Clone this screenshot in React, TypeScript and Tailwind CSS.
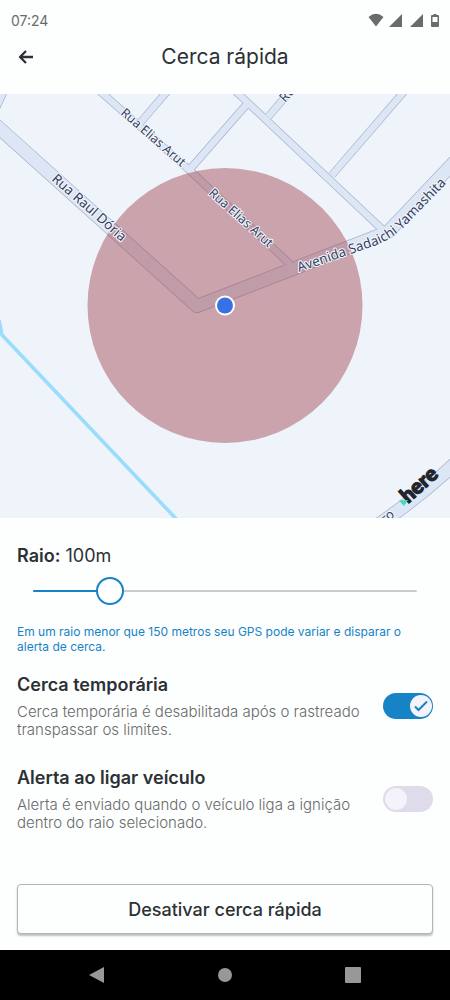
import { useState } from "react";

const ROADS = [
  { d: "M4 84 L-12 118", width: 13 },
  { d: "M140 123 L170 88", width: 7 },
  { d: "M191 168 L247 104", width: 7 },
  { d: "M268 117 L293 88", width: 7 },
  { d: "M332 175 L408 87", width: 7 },
  { d: "M93 85 L187 168 L290 264", width: 7 },
  { d: "M229 85 L384 231", width: 7 },
  { d: "M-12 118 L197 306 L388 232 L460 156", width: 13 },
  { d: "M372 529 Q420 497 460 459", width: 13 },
];

const LABEL = "fill-[#33415f] stroke-[#f4f7fd] font-['Noto_Sans',sans-serif]";

function MapView() {
  return (
    <svg
      viewBox="0 94 450 424"
      role="img"
      aria-label="Mapa"
      className="block w-full bg-[#eff4fb]"
    >
      <defs>
        <path id="raul" d="M51 180 L160 276" />
        <path id="elias-1" d="M120 114 L220 201" />
        <path id="elias-2" d="M208 194 L308 283" />
        <path id="avenida" d="M299 272 L374 246 Q393 239 406 225 L480 149" />
      </defs>

      {/* Roads: casing first, then fill, so junctions merge */}
      <g fill="none" stroke="#a7b2cd" strokeLinejoin="round">
        {ROADS.map((r) => (
          <path key={r.d} d={r.d} strokeWidth={r.width + 1} />
        ))}
      </g>
      <g fill="none" stroke="#dde6f4" strokeLinejoin="round">
        {ROADS.map((r) => (
          <path key={r.d} d={r.d} strokeWidth={r.width - 0.4} />
        ))}
      </g>

      {/* River */}
      <path
        d="M-1 320 L2 335 L181 524"
        fill="none"
        stroke="#99dcfb"
        strokeWidth="3.6"
        strokeLinejoin="round"
      />

      {/* Fence */}
      <circle cx="225" cy="305.5" r="137.5" fill="#9d414b" fillOpacity="0.45" />

      <g className={LABEL} strokeWidth="2" paintOrder="stroke" strokeLinejoin="round">
        <text fontSize="13.500">
          <textPath href="#raul">Rua Raul Dória</textPath>
        </text>
        <text fontSize="12.500">
          <textPath href="#elias-1">Rua Elias Arut</textPath>
        </text>
        <text fontSize="12.500">
          <textPath href="#elias-2">Rua Elias Arut</textPath>
        </text>
        <text fontSize="13.500">
          <textPath href="#avenida">Avenida Sadaichi Yamashita</textPath>
        </text>
        <text fontSize="13" transform="translate(285 103) rotate(-48)">Ru</text>
        <text fontSize="13" transform="translate(385 524) rotate(-38)">ro</text>
      </g>

      {/* HERE logo */}
      <text
        transform="translate(408 504) rotate(-42)"
        fontSize="21"
        fontWeight="900"
        strokeWidth="1.2"
        className="fill-[#20242b] stroke-[#20242b] font-[Lato,sans-serif]"
      >
        here
      </text>
      <path d="M399 500.500 L408 500 L404 506 Z" fill="#3edbc0" />

      {/* Vehicle */}
      <circle cx="225" cy="305.500" r="10" fill="#fff" />
      <circle cx="225" cy="305.500" r="8" fill="#3870e6" />
    </svg>
  );
}

function StatusBar() {
  return (
    <div className="flex h-10 items-center justify-between pr-2 pl-[11px] text-[#6b6b6b]">
      <span className="text-[14px]">07:24</span>
      <svg width="74" height="16" viewBox="0 0 74 16" fill="currentColor" aria-hidden="true">
        <path d="M0.500 5 Q8 -1.400 15.500 5 L8 14.500 Z" />
        <path d="M34 2 V15 H21 Z" />
        <path d="M55 2 V15 H42 Z" />
        <path
          fillRule="evenodd"
          d="M65.500 2 H68.500 V3 H70 Q71 3 71 4 V14 Q71 15 70 15 H64 Q63 15 63 14 V4 Q63 3 64 3 H65.500 Z M64.500 5 V10 H69.500 V5 Z"
        />
      </svg>
    </div>
  );
}

type ToggleRowProps = {
  id: string;
  title: string;
  description: string;
  checked: boolean;
  onChange: (checked: boolean) => void;
};

function ToggleRow({ id, title, description, checked, onChange }: ToggleRowProps) {
  return (
    <div className="flex items-center justify-between gap-4">
      <div className="flex flex-col gap-1.5">
        <label htmlFor={id} className="text-[18px] leading-6 font-semibold">
          {title}
        </label>
        <p id={`${id}-desc`} className="text-[15px] leading-[18px] font-light text-[#686b6b]">
          {description}
        </p>
      </div>
      <div className="relative h-[26px] w-[50px] shrink-0">
        <input
          id={id}
          type="checkbox"
          role="switch"
          aria-describedby={`${id}-desc`}
          checked={checked}
          onChange={(e) => onChange(e.target.checked)}
          className="block h-full w-full cursor-pointer appearance-none rounded-full bg-[#dfdbea] checked:bg-[#1583c5]"
        />
        <span
          className={`pointer-events-none absolute top-[2px] flex h-[22px] w-[22px] items-center justify-center rounded-full bg-[#f4f2fb] ${
            checked ? "right-[1px] text-[#1583c5]" : "left-[2px] text-[#f4f2fb]"
          }`}
        >
          <svg width="14" height="12" viewBox="0 0 14 12" fill="none" aria-hidden="true">
            <path d="M1 6.500 L4.500 10 L13 1.500" stroke="currentColor" strokeWidth="2" />
          </svg>
        </span>
      </div>
    </div>
  );
}

export default function App() {
  const [radius, setRadius] = useState(100);
  const [temporary, setTemporary] = useState(true);
  const [ignitionAlert, setIgnitionAlert] = useState(false);

  return (
    <div className="flex min-h-screen flex-col bg-[#fdfefe] font-[Inter,sans-serif] text-[#2b3135]">
      <StatusBar />

      <header className="mb-5 grid h-[34px] grid-cols-[28px_1fr_28px] items-center px-3">
        <button type="button" aria-label="Voltar" className="flex justify-center">
          <svg width="16" height="14" viewBox="0 0 16 14" fill="none" aria-hidden="true">
            <path
              d="M8 1 L2 7 L8 13 M2 7 H15"
              stroke="currentColor"
              strokeWidth="2.300"
              strokeLinejoin="round"
            />
          </svg>
        </button>
        <h1 className="text-center text-[21px]">Cerca rápida</h1>
      </header>

      <MapView />

      <main className="flex flex-1 flex-col px-[17px] pt-[26px] pb-4">
        <label htmlFor="radius" className="text-[18px] leading-6">
          <span className="font-semibold">Raio:</span> {radius}m
        </label>

        <div className="relative mx-4 mt-[9px] flex h-7 items-center">
          <div className="h-[2px] w-full rounded-full bg-[#cbcbcb]">
            <div
              className="h-full rounded-full bg-[#1583c5]"
              style={{ width: `${radius / 5}%` }}
            />
          </div>
          {/* Overhangs by half a thumb so the thumb centre follows the track */}
          <input
            id="radius"
            type="range"
            min={0}
            max={500}
            step={10}
            value={radius}
            onChange={(e) => setRadius(Number(e.target.value))}
            className="absolute -inset-x-[14px] top-0 h-7 cursor-pointer appearance-none bg-transparent [&::-webkit-slider-thumb]:h-7 [&::-webkit-slider-thumb]:w-7 [&::-webkit-slider-thumb]:appearance-none [&::-webkit-slider-thumb]:rounded-full [&::-webkit-slider-thumb]:border-2 [&::-webkit-slider-thumb]:border-[#1583c5] [&::-webkit-slider-thumb]:bg-white"
          />
        </div>

        <p className="mt-[19px] text-[12px] leading-[15px] text-[#1583c5]">
          Em um raio menor que 150 metros seu GPS pode variar e disparar o alerta de cerca.
        </p>

        <div className="mt-[19px] flex flex-col gap-[27px]">
          <ToggleRow
            id="temporary"
            title="Cerca temporária"
            description="Cerca temporária é desabilitada após o rastreado transpassar os limites."
            checked={temporary}
            onChange={setTemporary}
          />
          <ToggleRow
            id="ignition"
            title="Alerta ao ligar veículo"
            description="Alerta é enviado quando o veículo liga a ignição dentro do raio selecionado."
            checked={ignitionAlert}
            onChange={setIgnitionAlert}
          />
        </div>

        <button
          type="button"
          className="mt-auto h-[50px] w-full rounded-[4px] border border-[#b4b4b4] bg-[#fdfefe] text-[18px] font-medium shadow-[0_2px_2px_rgba(0,0,0,0.25)]"
        >
          Desativar cerca rápida
        </button>
      </main>

      <nav className="flex h-[50px] items-center justify-around bg-black px-8 text-[#98989b]">
        <button type="button" aria-label="Voltar" className="p-2">
          <svg width="16" height="18" viewBox="0 0 16 18" fill="currentColor" aria-hidden="true">
            <path d="M15 1 V17 L0 9 Z" />
          </svg>
        </button>
        <button type="button" aria-label="Início" className="p-2">
          <span className="block h-[14px] w-[14px] rounded-full bg-current" />
        </button>
        <button type="button" aria-label="Recentes" className="p-2">
          <span className="block h-4 w-4 rounded-[1px] bg-current" />
        </button>
      </nav>
    </div>
  );
}
